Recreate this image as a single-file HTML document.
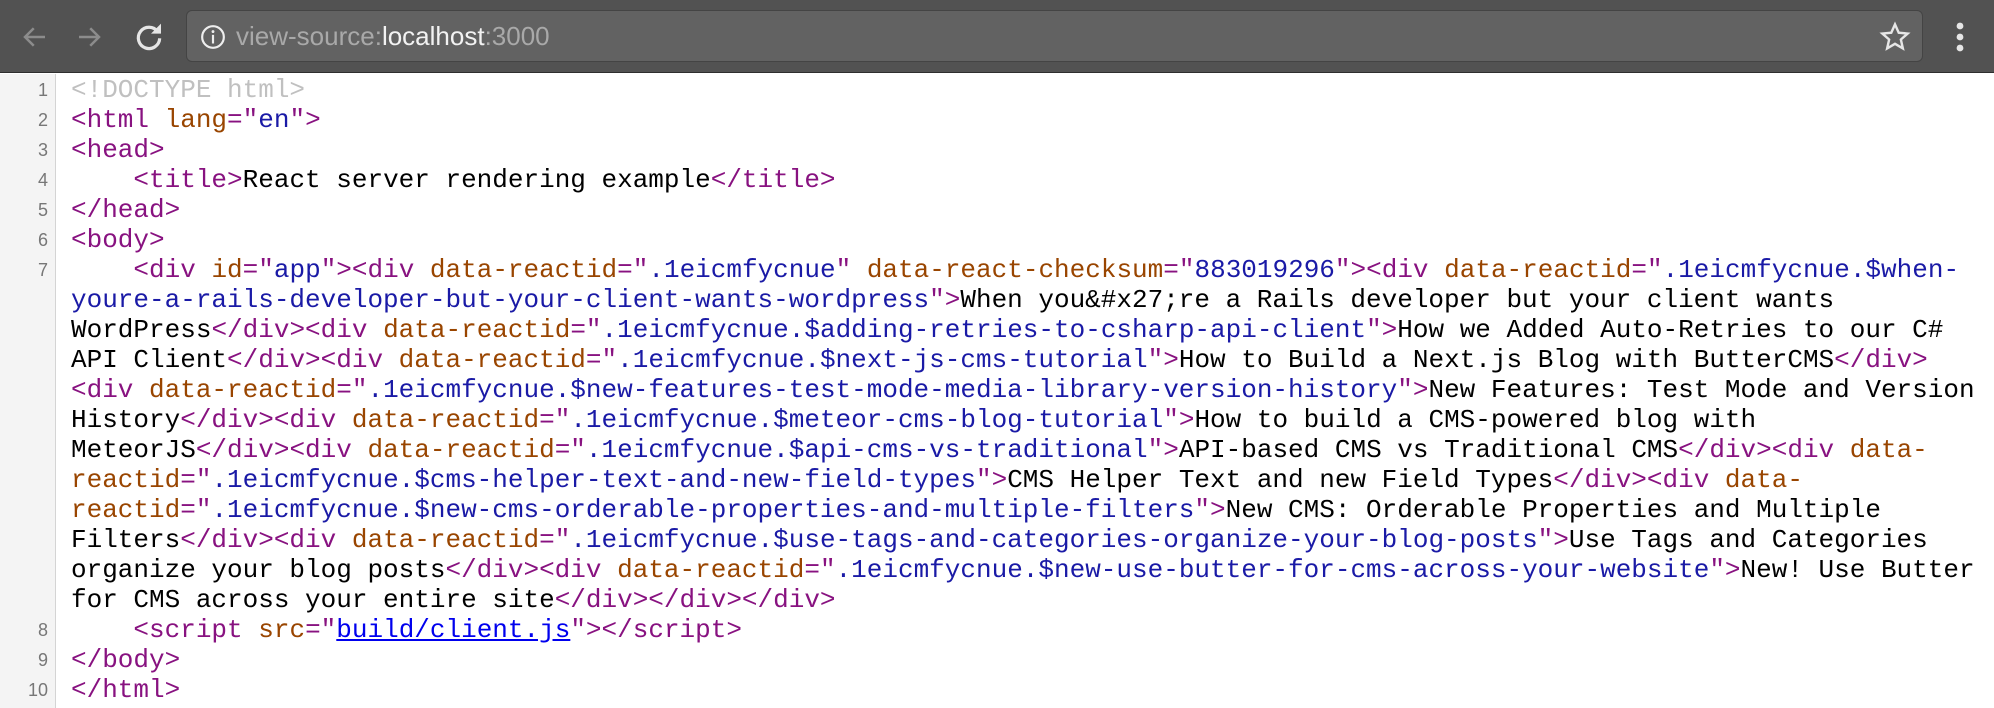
<!DOCTYPE html>
<html><head><style>
*{margin:0;padding:0;box-sizing:border-box}
body{width:1994px;height:708px;overflow:hidden;background:#fff;position:relative;font-family:"Liberation Sans",sans-serif}
#tb{position:absolute;left:0;top:0;width:1994px;height:73px;background:#525252;border-bottom:1px solid #2e2e2e}
#url{position:absolute;left:186px;top:10px;width:1737px;height:52px;background:#626262;border:1px solid #444;border-radius:6px}
#url .t{position:absolute;left:49px;top:10px;font-size:26px;color:#a9a9a9;white-space:pre;line-height:30px}
#url .t b{font-weight:normal;color:#f2f2f2}
#gut{position:absolute;left:0;top:74px;width:56px;height:634px;background:#f4f4f4;border-right:1px solid #d4d4d4}
#nums{position:absolute;left:0;top:75px;width:48px;text-align:right;font-size:18px;color:#777;line-height:30px}
#code{position:absolute;left:71px;top:75px;font-family:"Liberation Mono",monospace;font-size:26px;line-height:30px;white-space:pre;color:#000}
.g{color:#c0c0c0}.t{color:#881280}.a{color:#994500}.v{color:#1a1aa6}
a{color:#0000ee;text-decoration:underline}
</style></head><body>
<div id="tb">
<svg style="position:absolute;left:20px;top:22px" width="30" height="30" viewBox="0 0 24 24"><path d="M20 12H5M11 5l-7 7 7 7" fill="none" stroke="#8c8c8c" stroke-width="2"/></svg>
<svg style="position:absolute;left:74px;top:22px" width="30" height="30" viewBox="0 0 24 24"><path d="M4 12h15M13 5l7 7-7 7" fill="none" stroke="#8c8c8c" stroke-width="2"/></svg>
<svg style="position:absolute;left:133px;top:21px" width="32" height="32" viewBox="0 0 24 24"><path d="M18.5 8A8 8 0 1 0 20 13" fill="none" stroke="#e6e6e6" stroke-width="2.4"/><path d="M13.5 9.5H21V2z" fill="#e6e6e6"/></svg>
<div id="url">
<svg style="position:absolute;left:13px;top:13px" width="26" height="26" viewBox="0 0 24 24"><circle cx="12" cy="12" r="10" fill="none" stroke="#eee" stroke-width="2"/><rect x="11" y="10" width="2" height="8" fill="#eee"/><circle cx="12" cy="7" r="1.3" fill="#eee"/></svg>
<div class="t">view-source:<b>localhost</b>:3000</div>
<svg style="position:absolute;left:1692px;top:10px" width="32" height="32" viewBox="0 0 24 24"><path d="M12 2.5l2.8 6.3 6.7.6-5.1 4.5 1.5 6.7L12 17.1l-5.9 3.5 1.5-6.7-5.1-4.5 6.7-.6z" fill="none" stroke="#e6e6e6" stroke-width="1.8" stroke-linejoin="miter"/></svg>
</div>
<svg style="position:absolute;left:1952px;top:20px" width="16" height="34" viewBox="0 0 16 34"><circle cx="8" cy="6" r="3.4" fill="#e6e6e6"/><circle cx="8" cy="17" r="3.4" fill="#e6e6e6"/><circle cx="8" cy="28" r="3.4" fill="#e6e6e6"/></svg>
</div>
<div id="gut"></div>
<div id="nums">1<br>2<br>3<br>4<br>5<br>6<br>7<br><br><br><br><br><br><br><br><br><br><br><br>8<br>9<br>10</div>
<div id="code"><span class="g">&lt;!DOCTYPE html&gt;</span>
<span class="t">&lt;html <span class="a">lang</span>="<span class="v">en</span>"&gt;</span>
<span class="t">&lt;head&gt;</span>
    <span class="t">&lt;title&gt;</span>React server rendering example<span class="t">&lt;/title&gt;</span>
<span class="t">&lt;/head&gt;</span>
<span class="t">&lt;body&gt;</span>
    <span class="t">&lt;div <span class="a">id</span>="<span class="v">app</span>"&gt;&lt;div <span class="a">data-reactid</span>="<span class="v">.1eicmfycnue</span>" <span class="a">data-react-checksum</span>="<span class="v">883019296</span>"&gt;&lt;div <span class="a">data-reactid</span>="<span class="v">.1eicmfycnue.$when-</span></span>
<span class="v">youre-a-rails-developer-but-your-client-wants-wordpress</span><span class="t">"&gt;</span>When you&amp;#x27;re a Rails developer but your client wants
WordPress<span class="t">&lt;/div&gt;&lt;div <span class="a">data-reactid</span>="<span class="v">.1eicmfycnue.$adding-retries-to-csharp-api-client</span>"&gt;</span>How we Added Auto-Retries to our C#
API Client<span class="t">&lt;/div&gt;&lt;div <span class="a">data-reactid</span>="<span class="v">.1eicmfycnue.$next-js-cms-tutorial</span>"&gt;</span>How to Build a Next.js Blog with ButterCMS<span class="t">&lt;/div&gt;</span>
<span class="t">&lt;div <span class="a">data-reactid</span>="<span class="v">.1eicmfycnue.$new-features-test-mode-media-library-version-history</span>"&gt;</span>New Features: Test Mode and Version
History<span class="t">&lt;/div&gt;&lt;div <span class="a">data-reactid</span>="<span class="v">.1eicmfycnue.$meteor-cms-blog-tutorial</span>"&gt;</span>How to build a CMS-powered blog with
MeteorJS<span class="t">&lt;/div&gt;&lt;div <span class="a">data-reactid</span>="<span class="v">.1eicmfycnue.$api-cms-vs-traditional</span>"&gt;</span>API-based CMS vs Traditional CMS<span class="t">&lt;/div&gt;&lt;div <span class="a">data-</span></span>
<span class="a">reactid</span><span class="t">="<span class="v">.1eicmfycnue.$cms-helper-text-and-new-field-types</span>"&gt;</span>CMS Helper Text and new Field Types<span class="t">&lt;/div&gt;&lt;div <span class="a">data-</span></span>
<span class="a">reactid</span><span class="t">="<span class="v">.1eicmfycnue.$new-cms-orderable-properties-and-multiple-filters</span>"&gt;</span>New CMS: Orderable Properties and Multiple
Filters<span class="t">&lt;/div&gt;&lt;div <span class="a">data-reactid</span>="<span class="v">.1eicmfycnue.$use-tags-and-categories-organize-your-blog-posts</span>"&gt;</span>Use Tags and Categories
organize your blog posts<span class="t">&lt;/div&gt;&lt;div <span class="a">data-reactid</span>="<span class="v">.1eicmfycnue.$new-use-butter-for-cms-across-your-website</span>"&gt;</span>New! Use Butter
for CMS across your entire site<span class="t">&lt;/div&gt;&lt;/div&gt;&lt;/div&gt;</span>
    <span class="t">&lt;script <span class="a">src</span>="<a>build/client.js</a>"&gt;&lt;/script&gt;</span>
<span class="t">&lt;/body&gt;</span>
<span class="t">&lt;/html&gt;</span></div>
</body></html>
